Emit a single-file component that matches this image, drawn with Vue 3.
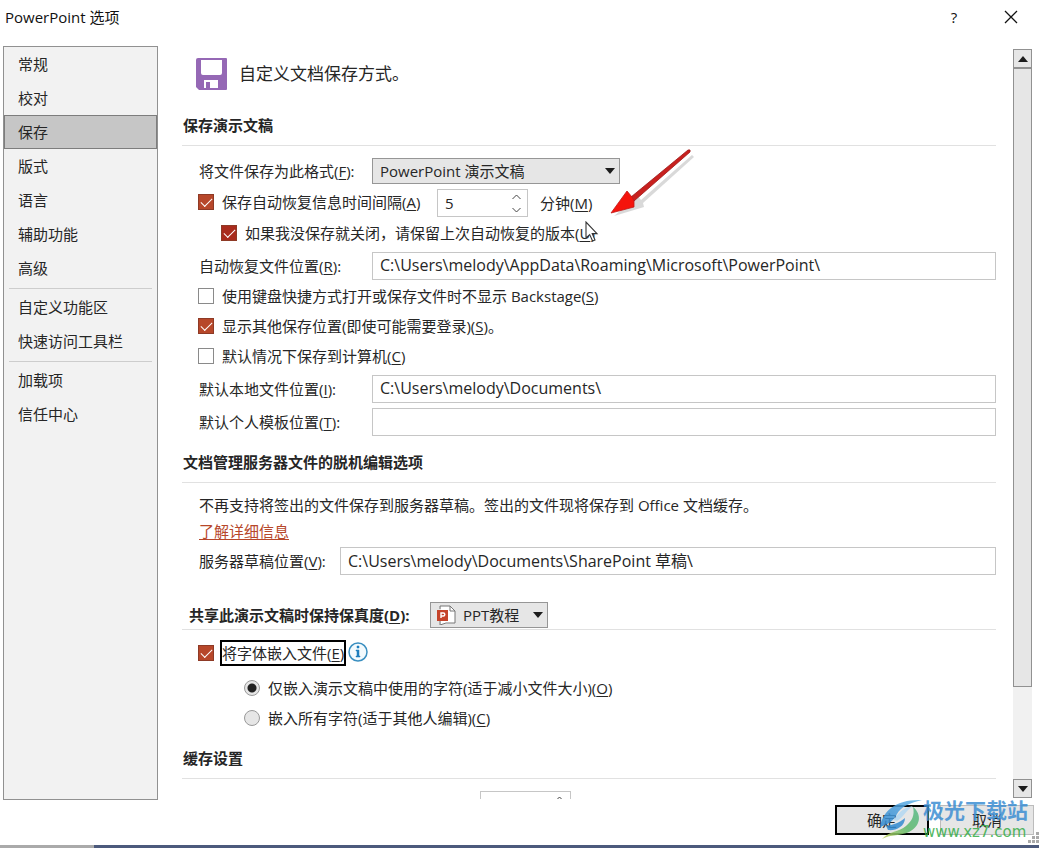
<script setup>
import { ref } from 'vue'

const navGroups = [
  ['常规', '校对', '保存', '版式', '语言', '辅助功能', '高级'],
  ['自定义功能区', '快速访问工具栏'],
  ['加载项', '信任中心']
]
const active = ref('保存')
const format = ref('PowerPoint 演示文稿')
const minutes = ref('5')
const autoSave = ref(true)
const keepLast = ref(true)
const hideBackstage = ref(false)
const showPlaces = ref(true)
const saveLocal = ref(false)
const embedFonts = ref(true)
const embedMode = ref('used')
const recoverPath = ref('C:\\Users\\melody\\AppData\\Roaming\\Microsoft\\PowerPoint\\')
const localPath = ref('C:\\Users\\melody\\Documents\\')
const templatePath = ref('')
const draftPath = ref('C:\\Users\\melody\\Documents\\SharePoint 草稿\\')
const deck = ref('PPT教程')
const cacheDays = ref('')
</script>

<template>
  <div class="dialog">
    <header class="titlebar">
      <h1>PowerPoint 选项</h1>
      <button class="tool" aria-label="帮助">?</button>
      <button class="tool" aria-label="关闭">
        <svg width="14" height="14" viewBox="0 0 14 14"><path d="M1 1L13 13M13 1L1 13" stroke="#111" stroke-width="1.3" fill="none" /></svg>
      </button>
    </header>

    <div class="body">
      <nav class="nav">
        <div v-for="(group, i) in navGroups" :key="i" class="group">
          <button v-for="item in group" :key="item" class="item" :class="{ active: item === active }" @click="active = item">{{ item }}</button>
        </div>
      </nav>

      <main class="content">
        <div class="intro">
          <svg width="32" height="32" viewBox="0 0 32 32">
            <path fill="#9568b5" d="M2 0H30Q31 0 31 1V31Q31 32 30 32H3L0 29V2Q0 0 2 0Z" />
            <path fill="#fff" d="M5 2H26V15Q26 17 24 17H7Q5 17 5 15ZM8 22H22V30H14V24H10V30H8Z" />
          </svg>
          <span>自定义文档保存方式。</span>
        </div>

        <h2 class="heading">保存演示文稿</h2>
        <div class="row first">
          <label class="cap" for="format">将文件保存为此格式(<u>F</u>):</label>
          <span class="drop wide">
            <select id="format" v-model="format"><option>PowerPoint 演示文稿</option></select>
            <svg class="caret" width="10" height="6" viewBox="0 0 10 6"><path d="M0 0H10L5 6Z" fill="#1c1c1c" /></svg>
          </span>
        </div>
        <div class="row spaced">
          <label class="check lead"><input v-model="autoSave" type="checkbox" /><span>保存自动恢复信息时间间隔(<u>A</u>)</span></label>
          <span class="spin">
            <input id="minutes" v-model="minutes" type="text" />
            <button aria-label="增加"><svg width="9" height="6" viewBox="0 0 9 6"><path d="M0.5 5L4.5 1L8.5 5" /></svg></button>
            <button aria-label="减少"><svg width="9" height="6" viewBox="0 0 9 6"><path d="M0.5 1L4.5 5L8.5 1" /></svg></button>
          </span>
          <label class="unit" for="minutes">分钟(<u>M</u>)</label>
        </div>
        <div class="row nested">
          <label class="check deep"><input v-model="keepLast" type="checkbox" /><span>如果我没保存就关闭，请保留上次自动恢复的版本(<u>U</u>)</span></label>
          <svg class="pointer" width="14" height="22" viewBox="0 0 14 22"><path d="M1 1V17L4.7 13.6L7.6 20L10 19L7.2 12.6H12Z" fill="#fff" stroke="#333" stroke-width="1.1" /></svg>
          <svg class="arrow" width="94" height="76" viewBox="0 0 94 76">
            <path d="M4 69L28 49L31 53L82 8L84 10L33 56L34 60Z" fill="#666" opacity=".25" />
            <path d="M21 50L78 3Q81 2 80 5L24 54Z" fill="#c8201e" stroke="#9c1717" stroke-width=".8" />
            <path d="M1 66L17 44L22 50L24 54L24 60Z" fill="#f5140c" stroke="#c01717" stroke-width=".8" />
          </svg>
        </div>
        <div class="row field">
          <label class="cap" for="recover">自动恢复文件位置(<u>R</u>):</label>
          <input id="recover" v-model="recoverPath" class="text" type="text" />
        </div>
        <div class="checks">
          <label class="check"><input v-model="hideBackstage" type="checkbox" /><span>使用键盘快捷方式打开或保存文件时不显示 Backstage(<u>S</u>)</span></label>
          <label class="check"><input v-model="showPlaces" type="checkbox" /><span>显示其他保存位置(即使可能需要登录)(<u>S</u>)。</span></label>
          <label class="check"><input v-model="saveLocal" type="checkbox" /><span>默认情况下保存到计算机(<u>C</u>)</span></label>
        </div>
        <div class="row field">
          <label class="cap" for="local">默认本地文件位置(<u>I</u>):</label>
          <input id="local" v-model="localPath" class="text" type="text" />
        </div>
        <div class="row spaced">
          <label class="cap" for="template">默认个人模板位置(<u>T</u>):</label>
          <input id="template" v-model="templatePath" class="text" type="text" />
        </div>

        <h2 class="heading offline">文档管理服务器文件的脱机编辑选项</h2>
        <p class="note">不再支持将签出的文件保存到服务器草稿。签出的文件现将保存到 Office 文档缓存。</p>
        <p class="more"><a href="#">了解详细信息</a></p>
        <div class="row field">
          <label class="cap short" for="draft">服务器草稿位置(<u>V</u>):</label>
          <input id="draft" v-model="draftPath" class="text" type="text" />
        </div>

        <h2 class="heading share">
          <label for="deck">共享此演示文稿时保持保真度(<u>D</u>):</label>
          <span class="drop deck">
            <svg class="file" width="20" height="20" viewBox="0 0 20 20">
              <path d="M4 1H13L18 6V18L4 19Z" fill="#fff" />
              <path d="M3 4V1H13L18 6V18H9L3 20V16M13 1V6H18" fill="none" stroke="#777" />
              <path d="M0 5H11V16H0Z" fill="#c5432a" />
              <path d="M4 13V8H6.3A1.5 1.5 0 0 1 6.3 11H4" fill="none" stroke="#fff" stroke-width="1.4" />
            </svg>
            <select id="deck" v-model="deck"><option>PPT教程</option></select>
            <svg class="caret" width="10" height="6" viewBox="0 0 10 6"><path d="M0 0H10L5 6Z" fill="#1c1c1c" /></svg>
          </span>
        </h2>
        <div class="row embed">
          <label class="check"><input v-model="embedFonts" type="checkbox" /><span class="focus">将字体嵌入文件(<u>E</u>)</span></label>
          <svg width="20" height="20" viewBox="0 0 20 20">
            <circle cx="10" cy="10" r="9" fill="#f3fafd" stroke="#3a8fc0" stroke-width="1.5" />
            <path d="M9 4H11V6H9ZM8 8H11V14H12V15H8V14H9V9H8Z" fill="#1f7fbd" stroke="#1f7fbd" stroke-width=".5" />
          </svg>
        </div>
        <div class="radios">
          <label class="check"><input v-model="embedMode" type="radio" value="used" /><span>仅嵌入演示文稿中使用的字符(适于减小文件大小)(<u>O</u>)</span></label>
          <label class="check"><input v-model="embedMode" type="radio" value="all" /><span>嵌入所有字符(适于其他人编辑)(<u>C</u>)</span></label>
        </div>

        <h2 class="heading cache">缓存设置</h2>
        <div class="row first">
          <label class="cap days" for="days">将文件保存在 Office 文档缓存中的天数(<u>K</u>):</label>
          <span class="spin">
            <input id="days" v-model="cacheDays" type="text" />
            <button aria-label="增加天数"><svg width="9" height="6" viewBox="0 0 9 6"><path d="M0.5 5L4.5 1L8.5 5" /></svg></button>
            <button aria-label="减少天数"><svg width="9" height="6" viewBox="0 0 9 6"><path d="M0.5 1L4.5 5L8.5 1" /></svg></button>
          </span>
        </div>
      </main>

      <div class="scrollbar">
        <button aria-label="向上滚动"><svg width="10" height="6" viewBox="0 0 10 6"><path d="M0 6H10L5 0Z" fill="#1c1c1c" /></svg></button>
        <div class="track"><div class="thumb"></div></div>
        <button aria-label="向下滚动"><svg width="10" height="6" viewBox="0 0 10 6"><path d="M0 0H10L5 6Z" fill="#1c1c1c" /></svg></button>
      </div>
    </div>

    <footer class="footer">
      <button class="btn ok">确定</button>
      <button class="btn">取消</button>
      <div class="watermark">
        <svg width="44" height="42" viewBox="0 0 44 42">
          <defs>
            <linearGradient id="sky" x1="0" y1="1" x2="1" y2="0"><stop offset="0" stop-color="#2f86cf" /><stop offset="1" stop-color="#63b4e8" /></linearGradient>
            <linearGradient id="leaf" x1="0" y1="1" x2="1" y2="0"><stop offset="0" stop-color="#c5cf5c" /><stop offset=".5" stop-color="#5cb96a" /><stop offset="1" stop-color="#58b98a" /></linearGradient>
          </defs>
          <path d="M1 29C4 12 18 1 43 2C30 5 22 9 18 16C14 24 9 26 1 29Z" fill="url(#sky)" />
          <path d="M14 22C20 16 22 10 34 8C27 12 25 19 18 23Z" fill="#b4d8f2" />
          <path d="M34 9C43 16 42 28 30 34C22 38 12 36 3 41C10 33 20 34 27 28C33 23 36 17 34 9Z" fill="url(#leaf)" />
          <path d="M7 28C14 27 20 25 26 20C26 29 16 33 9 32Z" fill="#338bd2" />
        </svg>
        <div class="brand"><span class="name">极光下载站</span><span class="site">www.xz7.com</span></div>
      </div>
      <svg class="grip" width="11" height="11" viewBox="0 0 11 11"><path d="M8 0h3v3h-3zM4 4h3v3h-3zM8 4h3v3h-3zM0 8h3v3h-3zM4 8h3v3h-3zM8 8h3v3h-3z" fill="#aaa" /></svg>
    </footer>
    <div class="desktop"></div>
  </div>
</template>

<style>
body { margin: 0; }
</style>

<style scoped>
* { box-sizing: border-box; }
.dialog {
  display: flex;
  flex-direction: column;
  height: 100vh;
  overflow: hidden;
  background: #fff;
  color: #262626;
  font: 15px/20px "Open Sans", "Noto Sans CJK SC", sans-serif;
}
button, input, select { font: inherit; color: inherit; margin: 0; }
button { padding: 0; }
u { text-underline-offset: 2px; text-decoration-thickness: 1px; }

.titlebar { display: flex; align-items: center; height: 34px; margin-bottom: 12px; padding: 0 7px 0 5px; color: #111; }
h1 { flex: 1; margin: 0; font-size: 15px; font-weight: 400; }
.tool { display: flex; align-items: center; justify-content: center; width: 42px; height: 30px; margin-left: 15px; border: 0; background: none; }

.body { display: flex; flex: 1; min-height: 0; }
.nav { width: 155px; margin-left: 3px; flex: none; border: 1px solid #919191; background: #f2f2f2; }
.group + .group::before { content: ""; display: block; height: 1px; margin: 3px 5px 1px; background: #cdcdcd; }
.item { display: block; width: 100%; height: 34px; padding: 0 13px; border: 1px solid transparent; background: none; text-align: left; }
.item.active { border-color: #7d7d7d; background: #c6c6c6; }

.content { flex: 1; min-width: 0; overflow: hidden; margin-bottom: 1px; padding: 12px 17px 0 24px; }
.intro { display: flex; align-items: center; gap: 11px; height: 32px; margin-bottom: 16px; padding-left: 14px; font-size: 17px; }
.heading { display: flex; align-items: center; height: 40px; margin: 0; padding: 0 0 2px 1px; border-bottom: 1px solid #e1e1e1; font-size: 15px; font-weight: 700; }
.offline { margin-top: 7px; }
.share { align-items: flex-end; margin-top: 15px; padding: 0 0 1px 7px; }
.share label { width: 241px; line-height: 26px; white-space: nowrap; }
.cache { margin-top: 6px; }

.row { display: flex; align-items: center; padding-left: 16px; }
.first { margin-top: 12px; }
.spaced { margin-top: 5px; }
.field { margin-top: 3px; }
.nested { position: relative; height: 32px; }
.cap { flex: none; width: 174px; padding-left: 1px; white-space: nowrap; }
.short { width: 142px; }
.days { width: 282px; padding-top: 2px; }
.text { flex: 1; min-width: 0; height: 28px; padding: 0 7px 2px; border: 1px solid #c6c6c6; border-radius: 0; background: #fff; outline: 0; font-size: 16px; }

.check { display: flex; align-items: center; gap: 8px; white-space: nowrap; }
.check input { flex: none; width: 16px; height: 16px; appearance: none; border: 1px solid #8a8a8a; background: #fff; }
.check input[type="checkbox"]:checked { position: relative; border-color: #8e3a26; background: #b7472a; }
.check input[type="checkbox"]:checked::after {
  content: "";
  position: absolute;
  left: 2px;
  top: 3px;
  width: 10px;
  height: 5px;
  border: solid #fff;
  border-width: 0 0 1px 1px;
  transform: rotate(-45deg);
}
.check input[type="radio"] { border-color: #999; border-radius: 50%; background: #e6e6e6; }
.check input[type="radio"]:checked { background: radial-gradient(circle, #222 4px, #e6e6e6 5px); }
.lead { align-self: flex-start; width: 223px; height: 26px; }
.deep { padding-left: 23px; }
.check.deep input:checked { background: #a92b1c; }
.checks { margin: 1px 0 4px; padding-left: 16px; }
.checks .check, .radios .check { height: 30px; }
.radios { margin-top: 7px; padding-left: 62px; }
.embed { height: 26px; margin-top: 10px; }
.check .focus { margin-left: -1px; padding: 2px 1px; outline: 2px solid #000; outline-offset: -1px; }
.embed svg { margin: -2px 0 0 3px; }

.drop { position: relative; display: flex; height: 26px; }
.drop select { width: 100%; padding: 0 24px 0 7px; appearance: none; border: 1px solid #969696; border-radius: 0; background: #e6e6e6; font-weight: 400; }
.wide { width: 248px; }
.deck { width: 118px; }
.drop.deck select { padding-left: 32px; padding-right: 20px; }
.caret { position: absolute; right: 5px; top: 10px; pointer-events: none; }
.file { position: absolute; left: 7px; top: 3px; pointer-events: none; }
.spin { display: grid; grid-template: 1fr 1fr / 1fr 22px; width: 91px; height: 28px; border: 1px solid #c6c6c6; background: #fff; }
.check + .spin { margin-left: 16px; }
.spin input { grid-row: 1 / 3; min-width: 0; padding: 0 7px; border: 0; background: none; outline: 0; }
.spin button { display: flex; align-items: center; justify-content: center; border: 0; background: none; }
.spin path { fill: none; stroke: #444; }
.unit { margin-left: 12px; }
.pointer { position: absolute; left: 403px; top: 4px; }
.arrow { position: absolute; left: 428px; top: -70px; }

.note, .more { margin: 0; padding-left: 17px; line-height: 26px; }
.note { margin-top: 9px; }
a { color: #b7472a; text-underline-offset: 2px; }

.scrollbar { display: flex; flex-direction: column; flex: none; width: 19px; margin: 3px 7px 2px 0; }
.scrollbar button { display: flex; align-items: center; justify-content: center; height: 19px; border: 1px solid #919191; background: #e6e6e6; }
.track { flex: 1; background: #f1f1f1; }
.thumb { height: 87%; border: 1px solid #919191; background: #e6e6e6; }

.footer { position: relative; display: flex; justify-content: flex-end; gap: 11px; flex: none; height: 45px; padding: 5px 5px 0; }
.btn { width: 94px; height: 30px; border: 1px solid #bcbcbc; background: #e6e6e6; }
.ok { border: 2px solid #000; }
.watermark { position: absolute; right: 10px; top: -2px; display: flex; pointer-events: none; opacity: .85; }
.brand { display: flex; flex-direction: column; width: 106px; white-space: nowrap; }
.name { color: #3e8fd3; font-size: 21px; font-weight: 700; line-height: 25px; }
.site { color: #35ad47; font: 15px/18px "DejaVu Sans", sans-serif; }
.grip { position: absolute; right: 0; bottom: 2px; }
.desktop { flex: none; height: 3px; background: linear-gradient(90deg, #aaa 94px, #4c5a7c 94px); }
</style>
